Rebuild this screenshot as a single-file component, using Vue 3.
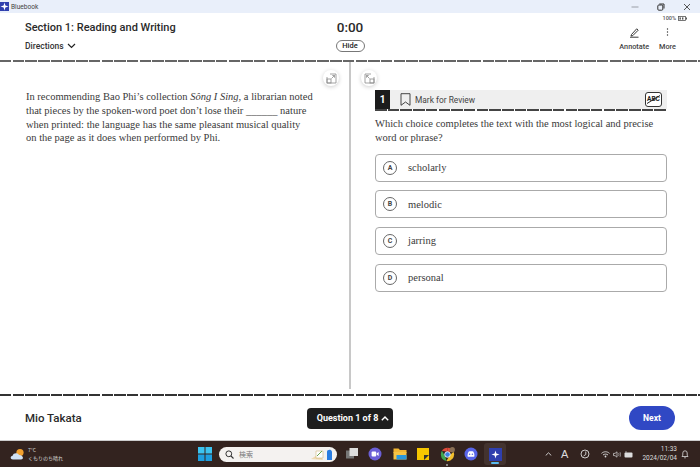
<script setup>
const choices = [
  { letter: 'A', text: 'scholarly' },
  { letter: 'B', text: 'melodic' },
  { letter: 'C', text: 'jarring' },
  { letter: 'D', text: 'personal' },
]
</script>

<template>
  <div class="win">
    <div class="titlebar">
      <div class="tb-left">
        <span class="app-icon"><svg width="9" height="9" viewBox="0 0 10 10"><path d="M5 0.5 L6 4 L9.5 5 L6 6 L5 9.5 L4 6 L0.5 5 L4 4 Z" fill="#fff"/></svg></span>
        <span class="app-name">Bluebook</span>
      </div>
      <div class="tb-ctrl">
        <svg width="8" height="8" viewBox="0 0 8 8"><path d="M0.5 4H7.5" stroke="#9a9ea6" stroke-width="1"/></svg>
        <svg width="8" height="8" viewBox="0 0 8 8"><rect x="0.8" y="2" width="5" height="5.2" rx="1" fill="none" stroke="#333" stroke-width="1"/><path d="M2.3 1H7V5.5" fill="none" stroke="#333" stroke-width="1"/></svg>
        <svg width="8" height="8" viewBox="0 0 8 8"><path d="M1 1L7 7M7 1L1 7" stroke="#444" stroke-width="0.9"/></svg>
      </div>
    </div>

    <header class="head">
      <div class="head-left">
        <div class="section">Section 1: Reading and Writing</div>
        <div class="directions">Directions
          <svg width="9" height="6" viewBox="0 0 9 6"><path d="M1 1L4.5 4.5L8 1" fill="none" stroke="#222" stroke-width="1.2"/></svg>
        </div>
      </div>
      <div class="head-mid">
        <div class="timer">0:00</div>
        <div class="hide">Hide</div>
      </div>
      <div class="head-right">
        <div class="battery">100% <svg width="9" height="5" viewBox="0 0 9 5"><rect x="0.5" y="0.5" width="7" height="4" fill="none" stroke="#555" stroke-width="0.8"/><rect x="1.5" y="1.4" width="1.4" height="2.2" fill="#555"/><rect x="4" y="1.4" width="1.4" height="2.2" fill="#555"/><rect x="8" y="1.5" width="1" height="2" fill="#555"/></svg></div>
        <div class="tools">
          <div class="tool">
            <svg width="11" height="11" viewBox="0 0 11 11"><path d="M2.5 7.5L7.7 1.8L9.2 3.2L3.8 8.6L2 9Z" fill="none" stroke="#222" stroke-width="0.9"/><path d="M1 10.2H9.5" stroke="#222" stroke-width="0.9"/></svg>
            <span>Annotate</span>
          </div>
          <div class="tool">
            <svg width="11" height="11" viewBox="0 0 11 11"><circle cx="5.5" cy="2" r="0.7" fill="#333"/><circle cx="5.5" cy="5" r="0.7" fill="#333"/><circle cx="5.5" cy="8" r="0.7" fill="#333"/></svg>
            <span>More</span>
          </div>
        </div>
      </div>
    </header>
    <div class="dash"></div>

    <main class="main">
      <section class="pane left">
        <p class="passage">In recommending Bao Phi’s collection <i>Sông I Sing</i>, a librarian noted that pieces by the spoken-word poet don’t lose their ______ nature when printed: the language has the same pleasant musical quality<br>on the page as it does when performed by Phi.</p>
        <button class="float float-l">
          <svg width="11" height="11" viewBox="0 0 11 11" fill="none" stroke="#8b8b8b" stroke-width="0.8"><path d="M4 1H10V10H1V4"/><rect x="1" y="6" width="4" height="4"/><path d="M5.5 5.5L8.5 2.5M6.3 2.5H8.5V4.7"/></svg>
        </button>
      </section>
      <div class="divider"></div>
      <section class="pane right">
        <button class="float float-r">
          <svg width="11" height="11" viewBox="0 0 11 11" fill="none" stroke="#8b8b8b" stroke-width="0.8"><path d="M7 1H1V10H10V4"/><rect x="6" y="6" width="4" height="4"/><path d="M5.5 5.5L2.5 2.5M4.7 2.5H2.5V4.7"/></svg>
        </button>
        <div class="qbar">
          <div class="qnum">1</div>
          <div class="mark">
            <svg width="11" height="13" viewBox="0 0 11 13"><path d="M1 0.7H10V12.3L5.5 9L1 12.3Z" fill="none" stroke="#333" stroke-width="0.9"/></svg>
            <span>Mark for Review</span>
          </div>
          <div class="abc"><span>ABC</span><svg class="abc-slash" width="17" height="15" viewBox="0 0 17 15"><path d="M2 11.5L15 3.5" stroke="#222" stroke-width="1"/></svg></div>
        </div>
        <div class="dash qdash"></div>
        <p class="question">Which choice completes the text with the most logical and precise word or phrase?</p>
        <div class="choices">
          <div v-for="c in choices" :key="c.letter" class="choice">
            <span class="letter">{{ c.letter }}</span>
            <span class="ctext">{{ c.text }}</span>
          </div>
        </div>
      </section>
    </main>

    <div class="dash dark"></div>
    <footer class="foot">
      <div class="name">Mio Takata</div>
      <div class="qnav">Question 1 of 8
        <svg width="8" height="5" viewBox="0 0 8 5"><path d="M.8 4.2L4 1L7.2 4.2" fill="none" stroke="#fff" stroke-width="1.4"/></svg>
      </div>
      <div class="next">Next</div>
    </footer>

    <div class="taskbar">
      <div class="weather">
        <svg width="15" height="12" viewBox="0 0 15 12"><circle cx="10" cy="4.5" r="3.6" fill="#f0a030"/><path d="M3 11.5C0 11.5 0 8 2.6 7.8C3.2 4.6 8 4.6 9 7C13 6.6 14.5 11.5 11 11.5Z" fill="#cfe1f5"/></svg>
        <div class="w-text"><div>7°C</div><div>くもりのち晴れ</div></div>
      </div>
      <div class="center">
        <svg class="win-logo" width="14" height="14" viewBox="0 0 14 14"><rect width="6.5" height="6.5" fill="#3cc4f0"/><rect x="7.5" width="6.5" height="6.5" fill="#3cc4f0"/><rect y="7.5" width="6.5" height="6.5" fill="#1e9fe0"/><rect x="7.5" y="7.5" width="6.5" height="6.5" fill="#1e9fe0"/></svg>
        <div class="search">
          <svg width="9" height="9" viewBox="0 0 9 9"><circle cx="3.8" cy="3.8" r="2.9" fill="none" stroke="#333" stroke-width="1"/><path d="M6 6L8.5 8.5" stroke="#333" stroke-width="1.1"/></svg>
          <span class="s-text">検索</span>
          <svg class="s-art" width="24" height="13" viewBox="0 0 24 13"><path d="M0 11L8 6L12 12Z" fill="#eed9b0"/><path d="M5 3H12V10H5Z" fill="#fff" stroke="#c9a86a" stroke-width="0.5"/><path d="M6 8L11 3" stroke="#6aa84f" stroke-width="1"/><path d="M16 3.5C16 1.8 20 0.5 21 3.5V12H16Z" fill="#2a7de1"/></svg>
        </div>
        <svg class="ti-a" width="14" height="14" viewBox="0 0 14 14"><rect x="1" y="3.5" width="8" height="8" fill="#777"/><rect x="4.5" y="1" width="8.5" height="8" fill="#ddd"/></svg>
        <svg class="ti-b" width="14" height="14" viewBox="0 0 14 14"><circle cx="7" cy="7" r="6.5" fill="#6b5fd6"/><rect x="3.6" y="4.6" width="4.6" height="4.8" rx="1" fill="#fff"/><path d="M8.6 6.6L10.6 5V9L8.6 7.4Z" fill="#fff"/></svg>
        <svg class="ti-c" width="14" height="14" viewBox="0 0 14 14"><path d="M0.5 1.5H5.5L7 3H13.5V6H0.5Z" fill="#f2b632"/><rect x="0.5" y="5" width="13" height="7.5" fill="#f6c445"/><path d="M3.5 8H13.5V12.5H3.5Z" fill="#2a98dc"/></svg>
        <svg class="ti-d" width="14" height="14" viewBox="0 0 14 14"><rect x="1" y="1" width="12" height="12" fill="#f7c600"/><path d="M8 13V8H13Z" fill="#333"/></svg>
        <div class="chrome-wrap">
          <svg width="15" height="15" viewBox="0 0 14 14"><path d="M7 .8A6.2 6.2 0 0 1 12.6 4.5H7Z" fill="#e04a3a"/><path d="M12.6 4.5A6.2 6.2 0 0 1 6 13.1L9 8Z" fill="#f3c02e"/><path d="M6 13.1A6.2 6.2 0 0 1 1.8 3.6L5 9Z" fill="#3fa650"/><path d="M1.8 3.6A6.2 6.2 0 0 1 7 .8V4.5Z" fill="#e04a3a"/><circle cx="7" cy="7" r="2.6" fill="#3c82e0" stroke="#fff" stroke-width=".8"/><circle cx="11.5" cy="2.5" r="2.4" fill="#8a6f55"/></svg>
          <span class="dot"></span>
        </div>
        <svg class="ti-e" width="14" height="14" viewBox="0 0 14 14"><circle cx="7" cy="7" r="6.5" fill="#5865e8"/><path d="M3.6 9.4C3.4 7.4 4 5.6 4.8 4.6C6 4.1 8 4.1 9.2 4.6C10 5.6 10.6 7.4 10.4 9.4C9 10 5 10 3.6 9.4Z" fill="#fff"/><circle cx="5.6" cy="7.2" r=".8" fill="#5865e8"/><circle cx="8.4" cy="7.2" r=".8" fill="#5865e8"/></svg>
        <div class="active-app">
          <span class="bb"><svg width="9" height="9" viewBox="0 0 10 10"><path d="M5 0.5 L6 4 L9.5 5 L6 6 L5 9.5 L4 6 L0.5 5 L4 4 Z" fill="#fff"/></svg></span>
          <span class="underline"></span>
        </div>
      </div>
      <div class="tray">
        <svg width="7" height="4" viewBox="0 0 7 4"><path d="M.7 3.5L3.5.8L6.3 3.5" fill="none" stroke="#ddd" stroke-width=".9"/></svg>
        <span class="ime">A</span>
        <svg class="t-circ" width="10" height="10" viewBox="0 0 10 10"><circle cx="5" cy="5" r="4" fill="none" stroke="#ddd" stroke-width=".9"/><path d="M5.8 2.5V5.5L3.5 7" fill="none" stroke="#ddd" stroke-width=".9"/></svg>
        <div class="sys">
          <svg width="9" height="7" viewBox="0 0 9 7"><path d="M.5 2.4C3 .2 6 .2 8.5 2.4M2 4C3.5 2.8 5.5 2.8 7 4" fill="none" stroke="#ddd" stroke-width=".9"/><circle cx="4.5" cy="5.5" r=".9" fill="#ddd"/></svg>
          <svg width="8" height="7" viewBox="0 0 8 7"><path d="M.5 2.4H2L4 .8V6.2L2 4.6H.5Z" fill="none" stroke="#ddd" stroke-width=".7"/><path d="M5.5 2C6.2 3 6.2 4 5.5 5M7 1.2C7.8 2.8 7.8 4.2 7 5.8" fill="none" stroke="#ddd" stroke-width=".6"/></svg>
          <svg width="10" height="7" viewBox="0 0 10 7"><rect x=".5" y="1.5" width="8" height="5" rx="1" fill="#ddd"/><path d="M2 1.5V.4" stroke="#ddd"/></svg>
        </div>
        <div class="clock"><div>11:33</div><div>2024/02/04</div></div>
        <svg width="8" height="10" viewBox="0 0 8 10"><path d="M1 7.5H7L6.2 6.2V4A2.2 2.2 0 0 0 1.8 4V6.2Z" fill="none" stroke="#ddd" stroke-width=".8"/><path d="M3.2 8.8H4.8" stroke="#ddd" stroke-width=".8"/></svg>
      </div>
    </div>
  </div>
</template>

<style scoped>
.win {
  width: 700px;
  height: 467px;
  display: flex;
  flex-direction: column;
  overflow: hidden;
  background: #fff;
  font-family: Roboto, "Liberation Sans", sans-serif;
  color: #222;
}
.titlebar {
  height: 13px;
  flex: none;
  background: #e9effa;
  display: flex;
  justify-content: space-between;
  align-items: center;
}
.tb-left { display: flex; align-items: center; gap: 2px; }
.app-icon {
  width: 9px; height: 9px;
  background: #2f3fae;
  display: flex; align-items: center; justify-content: center;
}
.app-name { font-size: 6.6px; color: #444; }
.tb-ctrl { display: flex; gap: 18px; padding-right: 9px; align-items: center; }
.head {
  height: 47px;
  flex: none;
  display: grid;
  grid-template-columns: 1fr auto 1fr;
  padding: 0 13px;
  box-sizing: border-box;
}
.head-left { padding: 8px 0 0 12px; }
.section { font-size: 11px; font-weight: 500; line-height: 14px; color: #2a2a2a; }
.directions {
  margin-top: 5px;
  font-size: 8.5px;
  font-weight: 500;
  line-height: 12px;
  display: flex;
  align-items: center;
  gap: 3px;
  color: #333;
}
.head-mid { display: flex; flex-direction: column; align-items: center; padding-top: 6px; }
.timer { font-size: 13.5px; font-weight: 500; line-height: 17px; color: #2a2a2a; }
.hide {
  margin-top: 4px;
  width: 29px; height: 12px;
  box-sizing: border-box;
  border: 1px solid #777;
  border-radius: 7px;
  font-size: 7.5px;
  font-weight: 500;
  line-height: 10px;
  text-align: center;
}
.head-right { display: flex; flex-direction: column; align-items: flex-end; }
.battery {
  margin-top: 2px;
  font-size: 5.5px;
  line-height: 7px;
  font-weight: 500;
  color: #555;
  display: flex;
  align-items: center;
  gap: 2px;
}
.tools { display: flex; gap: 10px; margin-top: 5px; padding-right: 11px; }
.tool {
  display: flex; flex-direction: column; align-items: center; gap: 4px;
  font-size: 7.3px; font-weight: 500; line-height: 9px; color: #444;
}
.dash {
  height: 2px;
  flex: none;
  background: repeating-linear-gradient(90deg, #666 0 11.5px, transparent 11.5px 12.7px);
}
.dash.dark { background: repeating-linear-gradient(90deg, #333 0 11.5px, transparent 11.5px 12.7px); }
.main { flex: 1; display: flex; min-height: 0; }
.pane { position: relative; box-sizing: border-box; }
.left { flex: 0 0 349px; padding: 28px 34px 0 26px; }
.divider { width: 2px; height: 327px; background: #c8c8c8; flex: none; }
.right { flex: 1; padding: 28px 33px 0 24px; }
.passage {
  margin: 0;
  font-family: "Liberation Serif", serif;
  font-size: 10.5px;
  line-height: 13.8px;
  color: #3a3a3a;
}
.float {
  position: absolute;
  top: 8px;
  width: 16px; height: 16px;
  padding: 0;
  border: none;
  border-radius: 50%;
  background: #fff;
  box-shadow: 0 1px 4px rgba(0,0,0,.2);
  display: flex; align-items: center; justify-content: center;
}
.float-l { right: 10px; }
.float-r { left: 10px; }
.qbar {
  height: 19px;
  background: #efefef;
  display: flex;
  align-items: center;
}
.qnum {
  width: 15px; height: 19px;
  background: #1c1c1c; color: #fff;
  font-size: 10px; font-weight: 700;
  line-height: 19px; text-align: center;
}
.mark {
  display: flex; align-items: center; gap: 4px;
  margin-left: 10px;
  font-size: 8.4px;
  color: #444;
}
.abc {
  position: relative;
  margin-left: auto;
  margin-right: 5px;
  width: 17px; height: 15px;
  box-sizing: border-box;
  border: 1px solid #333;
  border-radius: 3px;
  background: #fff;
  font-size: 6.5px; font-weight: 700;
  line-height: 13px; text-align: center;
}
.abc-slash { position: absolute; left: -1px; top: -1px; }
.qdash { background: repeating-linear-gradient(90deg, #444 0 11.5px, transparent 11.5px 12.7px); }
.question {
  margin: 6px 0 0;
  font-family: "Liberation Serif", serif;
  font-size: 10.5px;
  line-height: 13.8px;
  color: #3a3a3a;
}
.choices { display: flex; flex-direction: column; gap: 8.7px; margin-top: 9px; }
.choice {
  height: 28px;
  box-sizing: border-box;
  border: 1px solid #aaa;
  border-radius: 4px;
  display: flex;
  align-items: center;
  padding-left: 7px;
}
.letter {
  width: 14px; height: 14px;
  box-sizing: border-box;
  border: 1.4px solid #666;
  border-radius: 50%;
  font-size: 7px;
  font-weight: 700;
  display: flex;
  align-items: center;
  justify-content: center;
  color: #444;
}
.ctext {
  margin-left: 11px;
  font-family: "Liberation Serif", serif;
  font-size: 10.5px;
  color: #3a3a3a;
}
.foot {
  flex: none;
  height: 45px;
  display: grid;
  grid-template-columns: 1fr auto 1fr;
  align-items: center;
  padding: 0 25px;
  border-bottom: 1px solid #ccc;
  box-sizing: border-box;
}
.name { font-size: 11.5px; font-weight: 500; color: #2a2a2a; }
.qnav {
  height: 21px;
  padding: 0 4px 0 10px;
  box-sizing: border-box;
  background: #1e1e1e;
  color: #fff;
  border-radius: 4px;
  font-size: 9px;
  font-weight: 700;
  white-space: nowrap;
  display: flex;
  align-items: center;
  gap: 3px;
}
.next {
  justify-self: end;
  width: 46px; height: 24px;
  background: #3048c4;
  color: #fff;
  border-radius: 12px;
  font-size: 8.5px;
  font-weight: 700;
  line-height: 24px;
  text-align: center;
}
.taskbar {
  flex: none;
  height: 26px;
  background: #33231f;
  display: flex;
  align-items: center;
  padding-left: 10px;
  color: #ddd;
}
.weather { display: flex; align-items: center; gap: 3px; width: 188px; }
.w-text { font-size: 5px; line-height: 8px; font-family: "Noto Sans CJK JP", Roboto, sans-serif; }
.center { display: flex; align-items: center; }
.win-logo { margin-right: 7px; }
.search {
  width: 118px; height: 15px;
  background: #f4f2f0;
  border-radius: 8px;
  display: flex;
  align-items: center;
  box-sizing: border-box;
  padding: 0 2px 0 6px;
}
.s-text { font-size: 7px; color: #777; margin-left: 5px; font-family: "Noto Sans CJK JP", sans-serif; }
.s-art { margin-left: auto; }
.ti-a { margin-left: 8px; }
.ti-b { margin-left: 9px; }
.ti-c { margin-left: 11px; }
.ti-d { margin-left: 9px; }
.chrome-wrap { position: relative; margin-left: 10px; display: flex; }
.ti-e { margin-left: 9px; }
.dot { position: absolute; left: 6px; bottom: -4px; width: 2px; height: 2px; border-radius: 50%; background: #aaa; }
.active-app {
  position: relative;
  margin-left: 6px;
  width: 22px; height: 22px;
  background: #43332f;
  border-radius: 3px;
  display: flex; align-items: center; justify-content: center;
}
.bb {
  width: 13px; height: 13px;
  background: #2f3fae;
  display: flex; align-items: center; justify-content: center;
}
.underline { position: absolute; bottom: 1px; left: 7px; width: 8px; height: 2px; border-radius: 1px; background: #5bbcf0; }
.tray {
  margin-left: auto;
  display: flex;
  align-items: center;
  padding-right: 11px;
}
.ime { font-size: 11px; margin-left: 9px; font-family: "Liberation Sans", sans-serif; }
.t-circ { margin-left: 12px; }
.sys { display: flex; gap: 3px; align-items: center; margin-left: 11px; }
.clock { font-size: 6.5px; line-height: 9px; text-align: right; margin-left: 8px; margin-right: 4px; }
</style>
